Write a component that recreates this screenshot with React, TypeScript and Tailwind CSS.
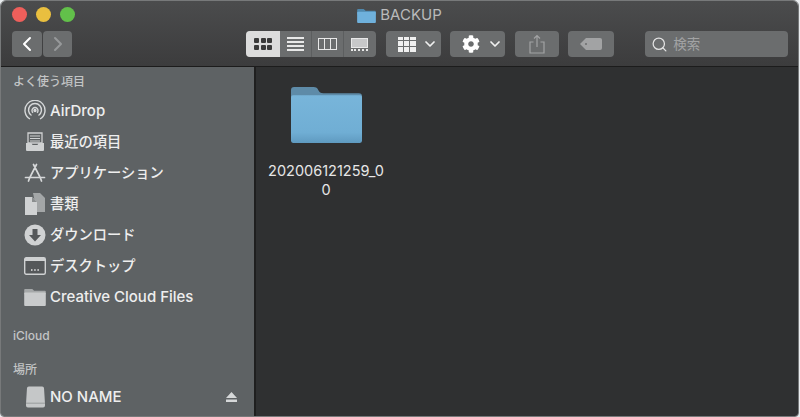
import { ChevronDown, ChevronLeft, ChevronRight, Search } from 'lucide-react';
import { FaCog } from 'react-icons/fa';
import type { ReactNode } from 'react';

const font = "font-['Inter','Noto_Sans_CJK_JP',sans-serif]";

function Btn({ className, children }: { className: string; children: ReactNode }) {
  return (
    <div className={`flex h-[26px] items-center rounded-[4px] bg-[#6b6d6e] ${className}`}>{children}</div>
  );
}

function FolderIcon({ className }: { className: string }) {
  return (
    <svg viewBox="0 0 70 56" className={className}>
      <defs>
        <linearGradient id="folderFront" x1="0" y1="0" x2="0" y2="1">
          <stop offset="0" stopColor="#78b5da" />
          <stop offset="0.78" stopColor="#70aed4" />
          <stop offset="1" stopColor="#5f9ac0" />
        </linearGradient>
      </defs>
      <path d="M0 4a3 3 0 0 1 3-3h19c3 0 4 1 5 3s2 3 5 3h35a3 3 0 0 1 3 3v6H0z" fill="#5e8ba8" />
      <rect x="0" y="9" width="70" height="47" rx="2" fill="url(#folderFront)" />
    </svg>
  );
}

function SmallFolder() {
  return (
    <svg viewBox="0 0 24 20" className="h-[18px] w-[22px]">
      <path d="M0 2a1 1 0 0 1 1-1h8l2 2h12a1 1 0 0 1 1 1v3H0z" fill="#a5a8a9" />
      <rect x="0" y="5" width="24" height="15" rx="1" fill="#c9cbcc" />
    </svg>
  );
}

function AirDropIcon() {
  return (
    <svg viewBox="0 0 22 22" className="h-[22px] w-[22px]" fill="none" stroke="#d6d8d9" strokeWidth="1.4">
      <path d="M6 19a10 10 0 1 1 10 0" />
      <path d="M7.5 15.5a6.5 6.5 0 1 1 7 0" />
      <path d="M9 12.8a3 3 0 1 1 4 0" />
      <circle cx="11" cy="10.5" r="1" fill="#d6d8d9" />
    </svg>
  );
}

function RecentsIcon() {
  return (
    <svg viewBox="0 0 20 20" className="h-[20px] w-[20px]">
      <path d="M3 1h14v10H3z" fill="none" stroke="#cfd1d2" strokeWidth="1.3" />
      <path d="M5 4h10M5 6.5h10M5 9h10" stroke="#cfd1d2" strokeWidth="1.2" />
      <path d="M1 11h5.5l1 2h5l1-2H19v7a1 1 0 0 1-1 1H2a1 1 0 0 1-1-1z" fill="#cfd1d2" />
    </svg>
  );
}

function AppsIcon() {
  return (
    <svg viewBox="0 0 22 22" className="h-[22px] w-[22px]" fill="none" stroke="#d6d8d9" strokeWidth="1.7" strokeLinecap="round">
      <path d="M9.5 2.5L16 15l1.5 4M12.5 2.5L6 15l-1.5 4M1.5 15.5h19" />
    </svg>
  );
}

function DocsIcon() {
  return (
    <svg viewBox="0 0 20 22" className="h-[22px] w-[20px]">
      <path d="M8 0h7l5 5v14h-8z" fill="#a3a6a7" />
      <path d="M0 4h7l5 5v13H0z" fill="#d0d2d3" />
      <path d="M7 4v5h5z" fill="#8b8e8f" />
    </svg>
  );
}

function DownloadIcon() {
  return (
    <svg viewBox="0 0 22 22" className="h-[22px] w-[22px]">
      <circle cx="11" cy="11" r="10.5" fill="#d0d2d3" />
      <path d="M8.5 5h5v6h3.5L11 17.5 5 11h3.5z" fill="#55585a" />
    </svg>
  );
}

function DesktopIcon() {
  return (
    <svg viewBox="0 0 22 18" className="h-[18px] w-[22px]">
      <rect x="0.7" y="0.7" width="20.6" height="16.6" rx="1.5" fill="#55585a" stroke="#cfd1d2" strokeWidth="1.4" />
      <rect x="1" y="1" width="20" height="3" fill="#cfd1d2" />
      <path d="M7 13h1.5M10.2 13h1.5M13.4 13h1.5" stroke="#e6e7e8" strokeWidth="1.5" />
    </svg>
  );
}

function DriveIcon() {
  return (
    <svg viewBox="0 0 20 22" className="h-[22px] w-[19px]">
      <path d="M3 0h14a2 2 0 0 1 2 2l1 16v2a2 2 0 0 1-2 2H2a2 2 0 0 1-2-2v-2L1 2a2 2 0 0 1 2-2z" fill="#c5c7c8" />
      <path d="M0 17.5h20" stroke="#8b8e8f" strokeWidth="0.8" />
    </svg>
  );
}

function GridIcon() {
  return (
    <div className="grid grid-cols-3 gap-[1.5px]">
      {[0, 1, 2, 3, 4, 5].map((i) => (
        <div key={i} className="h-[5px] w-[5px] rounded-[1px] bg-[#3a3a3a]" />
      ))}
    </div>
  );
}

function ArrangeIcon() {
  return (
    <div className="grid grid-cols-3 grid-rows-[3px_5px_5px] gap-[1px]">
      {[0, 1, 2, 3, 4, 5, 6, 7, 8].map((i) => (
        <div key={i} className="w-[5.3px] bg-[#f0f0f0]" />
      ))}
    </div>
  );
}

function SidebarItem({ icon, label, cjk }: { icon: ReactNode; label: string; cjk?: boolean }) {
  return (
    <div className="flex h-[31px] items-center">
      <div className="flex w-[26px] justify-center">{icon}</div>
      <span className={`ml-[2px] font-medium text-[#eeeeee] ${cjk ? 'text-[14.25px]' : 'pt-[2px] text-[15px]'}`}>{label}</span>
    </div>
  );
}

const items = [
  { label: 'AirDrop', icon: <AirDropIcon /> },
  { label: '最近の項目', icon: <RecentsIcon />, cjk: true },
  { label: 'アプリケーション', icon: <AppsIcon />, cjk: true },
  { label: '書類', icon: <DocsIcon />, cjk: true },
  { label: 'ダウンロード', icon: <DownloadIcon />, cjk: true },
  { label: 'デスクトップ', icon: <DesktopIcon />, cjk: true },
  { label: 'Creative Cloud Files', icon: <SmallFolder /> },
];

export default function App() {
  return (
    <div className={`h-[417px] w-[800px] overflow-hidden bg-[#e9ecef] ${font}`}>
      <div className="flex h-[417px] w-[799px] flex-col overflow-hidden rounded-t-[6px] rounded-b-[4px] border border-[#77797a]">
        <header className="flex h-[66px] shrink-0 flex-col border-b border-[#1c1c1c] bg-gradient-to-b from-[#4b4c4d] to-[#3c3c3d]">
          <div className="relative flex h-[29px] items-center justify-center">
            <div className="absolute left-[11px] top-[6px] flex gap-[9px]">
              <div className="h-[15px] w-[15px] rounded-full bg-[#ee5f5b]" />
              <div className="h-[15px] w-[15px] rounded-full bg-[#e9bf3f]" />
              <div className="h-[15px] w-[15px] rounded-full bg-[#62c04a]" />
            </div>
            <svg viewBox="0 0 20 16" className="mr-[4px] h-[15px] w-[19px]">
              <path d="M0 2a1 1 0 0 1 1-1h6l2 2h10a1 1 0 0 1 1 1v3H0z" fill="#4f88ad" />
              <rect x="0" y="4" width="20" height="12" rx="1" fill="#6fb1dc" />
            </svg>
            <span className="text-[15px] text-[#b9babb]">BACKUP</span>
          </div>
          <div className="flex items-center pl-[11px] pr-[10px] pt-[1px]">
            <div className="flex gap-[1px]">
              <Btn className="w-[30px] justify-center"><ChevronLeft size={24} strokeWidth={2} className="text-white" /></Btn>
              <Btn className="w-[29px] justify-center"><ChevronRight size={24} strokeWidth={2} className="text-[#97999a]" /></Btn>
            </div>
            <div className="ml-[174px] flex h-[26px] w-[130px] overflow-hidden rounded-[4px] bg-[#6b6d6e]">
              <div className="flex w-[34px] items-center justify-center bg-[#dcdcdc]"><GridIcon /></div>
              <div className="flex w-[32px] flex-col items-center justify-center gap-[2.5px] border-r border-[#5c5e5f]">
                {[0, 1, 2, 3].map((i) => <div key={i} className="h-[1.5px] w-[17px] bg-[#e8e8e8]" />)}
              </div>
              <div className="flex w-[32px] items-center justify-center border-r border-[#5c5e5f]">
                <div className="flex h-[12px] w-[19px] border border-[#e8e8e8]">
                  <div className="flex-1 border-r border-[#e8e8e8]" />
                  <div className="flex-1 border-r border-[#e8e8e8]" />
                  <div className="flex-1" />
                </div>
              </div>
              <div className="flex flex-1 flex-col items-center justify-center gap-[1px]">
                <div className="h-[10px] w-[17px] border border-[#e8e8e8] bg-[#c7c8c9]" />
                <div className="h-[2px] w-[17px] border-t-2 border-dotted border-[#e8e8e8]" />
              </div>
            </div>
            <Btn className="ml-[10px] w-[55px] gap-[6px] pl-[12px]">
              <ArrangeIcon />
              <ChevronDown size={16} strokeWidth={2.6} className="text-[#f0f0f0]" />
            </Btn>
            <Btn className="ml-[9px] w-[55px] gap-[7px] pl-[12px]">
              <FaCog size={18} className="text-white" />
              <ChevronDown size={16} strokeWidth={2.6} className="text-[#f0f0f0]" />
            </Btn>
            <Btn className="ml-[10px] w-[45px] justify-center">
              <svg viewBox="0 0 16 20" className="h-[20px] w-[16px]" fill="none" stroke="#a2a3a4" strokeWidth="1.2">
                <path d="M4.5 8H1v11h14V8h-3.5M8 13V1.5M5 4.5l3-3 3 3" />
              </svg>
            </Btn>
            <Btn className="ml-[9px] w-[46px] justify-center">
              <svg viewBox="0 0 22 12" className="h-[12px] w-[22px]">
                <path d="M6 0h14a2 2 0 0 1 2 2v8a2 2 0 0 1-2 2H6L0 6z" fill="#a2a3a4" />
                <circle cx="6" cy="6" r="1" fill="#6b6d6e" />
              </svg>
            </Btn>
            <div className="ml-[31px] flex h-[26px] w-[143px] items-center rounded-[4px] bg-[#6b6d6e] pl-[6px]">
              <Search size={17} strokeWidth={1.8} className="text-[#e2e2e2]" />
              <span className="ml-[5px] text-[13.5px] text-[#a2a3a4]">検索</span>
            </div>
          </div>
        </header>
        <div className="flex min-h-0 flex-1">
          <aside className="w-[255px] shrink-0 border-r-2 border-[#1f1f1f] bg-[#5e6264] pl-[21px] pr-[17px]">
            <div className="-ml-[9px] pt-[6px] text-[12px] font-medium leading-[18px] text-[#c3c5c6]">よく使う項目</div>
            <div className="mt-[4px]">
              {items.map((item) => <SidebarItem key={item.label} icon={item.icon} label={item.label} cjk={item.cjk} />)}
            </div>
            <div className="-ml-[9px] mt-[15px] text-[12px] font-medium leading-[18px] text-[#c3c5c6]">iCloud</div>
            <div className="-ml-[9px] mt-[16px] text-[12px] font-medium leading-[18px] text-[#c3c5c6]">場所</div>
            <div className="mt-[2px] flex h-[31px] items-center justify-between">
              <div className="flex items-center">
                <div className="flex w-[26px] justify-center"><DriveIcon /></div>
                <span className="ml-[2px] pt-[2px] text-[15px] font-medium text-[#eeeeee]">NO NAME</span>
              </div>
              <svg viewBox="0 0 11 10" className="h-[10px] w-[11px]" fill="#d6d8d9">
                <path d="M5.5 0L11 6H0zM0 7.5h11V10H0z" />
              </svg>
            </div>
          </aside>
          <main className="flex-1 bg-[#2f3031] pl-[11px] pt-[19px]">
            <div className="flex w-[118px] flex-col items-center">
              <FolderIcon className="h-[57px] w-[71px]" />
              <div className="mt-[18px] w-[118px] break-all text-center text-[14.5px] leading-[19px] text-[#e6e6e6]">
                202006121259_00
              </div>
            </div>
          </main>
        </div>
      </div>
    </div>
  );
}
